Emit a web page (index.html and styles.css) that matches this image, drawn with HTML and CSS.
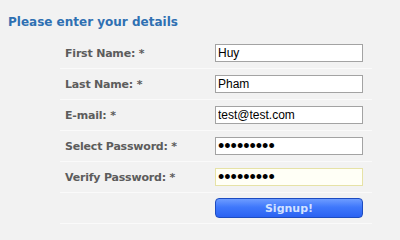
FILE: index.html
```html
<!DOCTYPE html>
<html>
<head>
<meta charset="utf-8">
<link rel="stylesheet" href="styles.css">
</head>
<body>
<h2 class="title">Please enter your details</h2>
<form class="form">
  <div class="row">
    <label class="label">First Name: *</label>
    <input class="field" type="text" value="Huy">
  </div>
  <div class="row">
    <label class="label">Last Name: *</label>
    <input class="field" type="text" value="Pham">
  </div>
  <div class="row">
    <label class="label">E-mail: *</label>
    <input class="field" type="text" value="test@test.com">
  </div>
  <div class="row">
    <label class="label">Select Password: *</label>
    <input class="field pass" type="password" value="123456789">
  </div>
  <div class="row">
    <label class="label">Verify Password: *</label>
    <input class="field pass focus" type="password" value="123456789">
  </div>
  <div class="row">
    <span class="label"></span>
    <button class="btn" type="button">Signup!</button>
  </div>
</form>
</body>
</html>
```
FILE: styles.css
```css
html, body {
  margin: 0;
  padding: 0;
  background: #f2f2f2;
}
body {
  width: 400px;
  height: 231px;
  overflow: hidden;
  font-family: "DejaVu Sans", Verdana, sans-serif;
}
.title {
  margin: 0;
  padding: 15px 0 0 8px;
  height: 27px;
  box-sizing: border-box;
  font-size: 12px;
  font-weight: bold;
  color: #2f70b2;
  line-height: 14px;
}
.form {
  margin: 0 0 0 60px;
  width: 312px;
  display: flex;
  flex-direction: column;
  padding-top: 11px;
}
.row {
  display: flex;
  align-items: center;
  height: 30px;
  border-bottom: 1px solid #fafafa;
}
.label {
  width: 150px;
  padding-left: 5px;
  font-size: 11px;
  font-weight: bold;
  color: #5c5c5c;
  letter-spacing: -0.2px;
}
.field {
  box-sizing: border-box;
  width: 148px;
  height: 18px;
  margin: 0;
  padding: 0 2px;
  border: 1px solid #a3a3a3;
  background: #ffffff;
  font-family: "Liberation Sans", Arial, sans-serif;
  font-size: 12px;
  color: #000;
  outline: none;
}
.pass {
  font-size: 18px;
  line-height: 14px;
}
.focus {
  border-color: #e6e2a6;
  background: #fffff6;
}
.btn {
  box-sizing: border-box;
  width: 148px;
  height: 20px;
  margin: 0;
  padding: 0;
  border: 1px solid #1d4cc0;
  border-radius: 4px;
  background: linear-gradient(#6d9cff 0%, #3f78fb 45%, #2a62f2 100%);
  font-family: "DejaVu Sans", Verdana, sans-serif;
  font-size: 11px;
  font-weight: bold;
  color: #d2e2ff;
}
```
